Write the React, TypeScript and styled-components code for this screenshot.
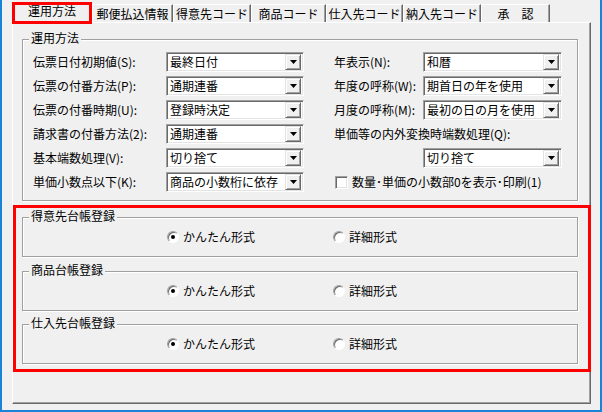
import React from 'react'
import styled, { createGlobalStyle } from 'styled-components'

const GlobalStyle = createGlobalStyle`
	* {
		box-sizing: border-box;
	}
	html,
	body {
		margin: 0;
		padding: 0;
		background: #f0f0f0;
	}
	body {
		font-family: "Noto Sans CJK JP", "Noto Sans", sans-serif;
		font-size: 12px;
		line-height: 14px;
		color: #000;
	}
`

const Window = styled.div`
	width: 602px;
	height: 412px;
	border: 2px solid #1883d7;
	border-top: none;
	background: #f0f0f0;
	padding: 2px 0 0 10px;
`

const TabStrip = styled.div`
	display: flex;
	align-items: flex-end;
	height: 20px;
`

const Tab = styled.div<{ $width: number; $active?: boolean }>`
	width: ${p => p.$width}px;
	display: flex;
	align-items: center;
	justify-content: center;
	white-space: nowrap;
	background: #f0f0f0;
	${p =>
		p.$active
			? `
		height: 22px;
		margin-bottom: -2px;
		border: 3px solid #ff0000;
		padding-bottom: 4px;
		position: relative;
		z-index: 1;
	`
			: `
		height: 18px;
		border-top: 1px solid #fff;
		border-left: 1px solid #fff;
		border-right: 1px solid #696969;
		box-shadow: inset -1px 0 #a0a0a0;
	`}
`

const Panel = styled.div`
	width: 579px;
	height: 382px;
	border-top: 1px solid #fff;
	border-left: 1px solid #fff;
	border-right: 1px solid #696969;
	border-bottom: 1px solid #696969;
	box-shadow: inset -1px -1px #a0a0a0;
`

const GroupBox = styled.div<{ $top: number }>`
	width: 556px;
	margin-top: ${p => p.$top}px;
	border: 1px solid #a0a0a0;
	box-shadow: inset 1px 1px #fff, 1px 1px #fff;
`

const MainGroup = styled(GroupBox)`
	margin-left: 9px;
	padding-bottom: 8px;
`

const GroupTitle = styled.div`
	width: fit-content;
	margin: -9px 0 0 6px;
	padding: 0 2px;
	background: #f0f0f0;
	line-height: 14px;
`

const SettingsGrid = styled.div`
	display: grid;
	grid-template-columns: 133px 138px 30px 89px 139px;
	grid-auto-rows: 20px;
	row-gap: 4px;
	align-items: center;
	margin-top: 7px;
	padding-left: 10px;
`

const Label = styled.span<{ $span?: number }>`
	white-space: nowrap;
	grid-column: ${p => (p.$span ? `span ${p.$span}` : 'auto')};
`

const ComboBox = styled.div`
	height: 20px;
	display: flex;
	align-items: center;
	background: #fff;
	border: 1px solid;
	border-color: #a0a0a0 #fff #fff #a0a0a0;
	box-shadow: inset 1px 1px #696969, inset -1px -1px #e3e3e3;
	padding: 1px 2px;
`

const ComboText = styled.span`
	flex: 1;
	padding-left: 1px;
	white-space: nowrap;
	line-height: 16px;
`

const DropButton = styled.span`
	width: 16px;
	height: 16px;
	display: flex;
	align-items: center;
	justify-content: center;
	background: #f0f0f0;
	border: 1px solid;
	border-color: #e3e3e3 #696969 #696969 #e3e3e3;
	box-shadow: inset 1px 1px #fff, inset -1px -1px #a0a0a0;
`

const CheckRow = styled.label`
	grid-column: span 2;
	display: flex;
	align-items: center;
	gap: 4px;
	padding-left: 1px;
	white-space: nowrap;
`

const CheckBox = styled.span`
	width: 13px;
	height: 13px;
	background: #fff;
	border: 1px solid;
	border-color: #a0a0a0 #fff #fff #a0a0a0;
	box-shadow: inset 1px 1px #696969, inset -1px -1px #e3e3e3;
`

const RedFrame = styled.div`
	margin: 4px -1px 0 0;
	border: 3px solid #ff0000;
	padding: 0 0 5px 6px;
`

const LedgerGroup = styled(GroupBox)`
	padding-bottom: 12px;
`

const RadioRow = styled.div`
	display: flex;
	margin-top: 7px;
	padding-left: 144px;
	height: 14px;
`

const RadioOption = styled.label`
	width: 166px;
	display: flex;
	align-items: center;
	gap: 4px;
	white-space: nowrap;
`

const RadioDot = styled.span<{ $checked?: boolean }>`
	width: 12px;
	height: 12px;
	border-radius: 50%;
	background: #fff;
	border: 1px solid;
	border-color: #a0a0a0 #fff #fff #a0a0a0;
	box-shadow: inset 1px 1px #696969;
	display: flex;
	align-items: center;
	justify-content: center;
	&::after {
		content: '';
		width: 4px;
		height: 4px;
		border-radius: 50%;
		background: ${p => (p.$checked ? '#000' : 'transparent')};
	}
`

const tabs: [string, number][] = [
	['運用方法', 80],
	['郵便払込情報', 81],
	['得意先コード', 78],
	['商品コード', 75],
	['仕入先コード', 77],
	['納入先コード', 78],
	['承　認', 69],
]

const leftRows: [string, string][] = [
	['伝票日付初期値(S):', '最終日付'],
	['伝票の付番方法(P):', '通期連番'],
	['伝票の付番時期(U):', '登録時決定'],
	['請求書の付番方法(2):', '通期連番'],
	['基本端数処理(V):', '切り捨て'],
	['単価小数点以下(K):', '商品の小数桁に依存'],
]

const Combo: React.FC<{ value: string }> = ({ value }) => (
	<ComboBox>
		<ComboText>{value}</ComboText>
		<DropButton>
			<svg width="7" height="4" viewBox="0 0 7 4">
				<polygon points="0,0 7,0 3.5,4" fill="#000" />
			</svg>
		</DropButton>
	</ComboBox>
)

const rightCells = [
	<>
		<Label>年表示(N):</Label>
		<Combo value="和暦" />
	</>,
	<>
		<Label>年度の呼称(W):</Label>
		<Combo value="期首日の年を使用" />
	</>,
	<>
		<Label>月度の呼称(M):</Label>
		<Combo value="最初の日の月を使用" />
	</>,
	<Label $span={2}>単価等の内外変換時端数処理(Q):</Label>,
	<>
		<span />
		<Combo value="切り捨て" />
	</>,
	<CheckRow>
		<CheckBox />
		数量･単価の小数部0を表示･印刷(1)
	</CheckRow>,
]

const ledgers = [
	{ title: '得意先台帳登録', top: 9 },
	{ title: '商品台帳登録', top: 14 },
	{ title: '仕入先台帳登録', top: 13 },
]

const App: React.FC = () => {
	return (
		<>
			<GlobalStyle />
			<Window>
				<TabStrip>
					{tabs.map(([name, width], i) => (
						<Tab key={name} $width={width} $active={i === 0}>
							{name}
						</Tab>
					))}
				</TabStrip>
				<Panel>
					<MainGroup $top={16}>
						<GroupTitle>運用方法</GroupTitle>
						<SettingsGrid>
							{leftRows.map(([label, value], i) => (
								<React.Fragment key={label}>
									<Label>{label}</Label>
									<Combo value={value} />
									<span />
									{rightCells[i]}
								</React.Fragment>
							))}
						</SettingsGrid>
					</MainGroup>
					<RedFrame>
						{ledgers.map(g => (
							<LedgerGroup key={g.title} $top={g.top}>
								<GroupTitle>{g.title}</GroupTitle>
								<RadioRow>
									<RadioOption>
										<RadioDot $checked />
										かんたん形式
									</RadioOption>
									<RadioOption>
										<RadioDot />
										詳細形式
									</RadioOption>
								</RadioRow>
							</LedgerGroup>
						))}
					</RedFrame>
				</Panel>
			</Window>
		</>
	)
}

export default App
